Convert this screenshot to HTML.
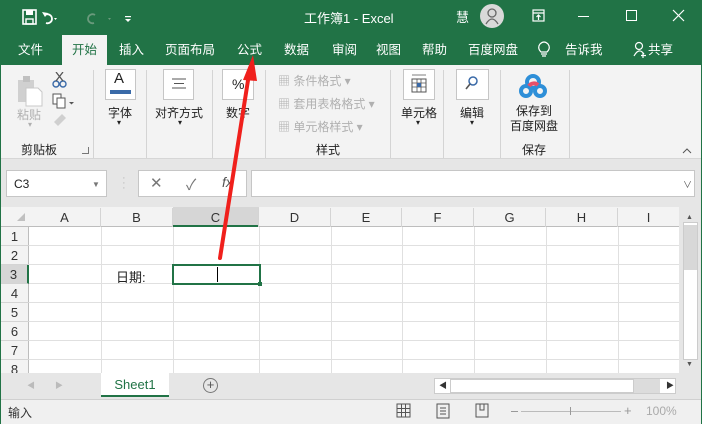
<!DOCTYPE html>
<html><head><meta charset="utf-8"><style>
*{margin:0;padding:0;box-sizing:border-box}
body{width:702px;height:424px;overflow:hidden;position:relative;background:#e6e6e6;font-family:"Liberation Sans","Noto Sans CJK SC",sans-serif;font-size:12px;color:#222}
.a{position:absolute}
.w{color:#fff}
.t{position:absolute;top:39px;color:#fff;font-size:12.5px}
.g{color:#b0b0b0}
.box{position:absolute;background:#fff;border:1px solid #c6c6c6}
.sep{position:absolute;top:70px;width:1px;height:88px;background:#d4d4d4}
.lbl{position:absolute;font-size:12px;text-align:center}
.ch{position:absolute;top:208px;height:19px;text-align:center;font-size:13px;line-height:19px;color:#333;border-right:1px solid #d4d4d4}
.rh{position:absolute;left:0;width:29px;height:19px;text-align:center;font-size:13px;line-height:19px;color:#333;border-bottom:1px solid #d4d4d4}
</style></head><body>
<div class="a" style="left:0;top:0;width:702px;height:65px;background:#217346"></div>
<svg class="a" style="left:22px;top:9px" width="120" height="18">
<rect x="1" y="1" width="13" height="14" fill="none" stroke="#fff" stroke-width="1.6"/><rect x="4" y="1" width="7" height="5" fill="#fff"/><rect x="4" y="10" width="7" height="5" fill="none" stroke="#fff" stroke-width="1.4"/>
<path d="M23 6 a4.5 4.5 0 1 1 1 8" fill="none" stroke="#fff" stroke-width="1.8"/><path d="M20 3 l3 5 l3 -4z" fill="#fff"/>
<path d="M32 9 l3 0 l-1.5 2z" fill="#fff"/>
<path d="M73 6 a4.5 4.5 0 1 0 -1 8" fill="none" stroke="#6a9a7c" stroke-width="1.8"/><path d="M86 9 l3 0 l-1.5 2z" fill="#6a9a7c"/>
<rect x="103" y="7" width="6" height="1.2" fill="#fff"/><path d="M103 10 l6 0 l-3 3z" fill="#fff"/>
</svg>
<div class="a w" style="left:304px;top:8px;font-size:13px">工作簿1 - Excel</div>
<div class="a w" style="left:456px;top:7px;font-size:13px">慧</div>
<div class="a" style="left:480px;top:4px;width:24px;height:24px;border-radius:50%;background:#d9d9d9"></div>
<svg class="a" style="left:484px;top:7px" width="16" height="18"><circle cx="8" cy="6" r="4" fill="none" stroke="#666" stroke-width="1.3"/><path d="M2 17 q6 -10 12 0" fill="none" stroke="#666" stroke-width="1.3"/></svg>
<svg class="a" style="left:532px;top:9px" width="14" height="14"><rect x="1" y="1" width="11" height="11" fill="none" stroke="#fff" stroke-width="1.2"/><path d="M1 4 h11 M6.5 6 v5 M4.5 8 l2 -2 l2 2" stroke="#fff" fill="none" stroke-width="1.2"/></svg>
<div class="a" style="left:578px;top:16px;width:11px;height:1px;background:#fff"></div>
<div class="a" style="left:626px;top:10px;width:11px;height:11px;border:1px solid #fff"></div>
<svg class="a" style="left:672px;top:9px" width="14" height="14"><path d="M1 1 L12 12 M12 1 L1 12" stroke="#fff" stroke-width="1.2"/></svg>
<div class="a" style="left:62px;top:35px;width:45px;height:30px;background:#f3f3f3"></div>
<div class="t" style="left:18px">文件</div>
<div class="t" style="left:72px;color:#217346">开始</div>
<div class="t" style="left:119px">插入</div>
<div class="t" style="left:165px">页面布局</div>
<div class="t" style="left:237px">公式</div>
<div class="t" style="left:284px">数据</div>
<div class="t" style="left:332px">审阅</div>
<div class="t" style="left:376px">视图</div>
<div class="t" style="left:422px">帮助</div>
<div class="t" style="left:468px">百度网盘</div>
<svg class="a" style="left:537px;top:40px" width="14" height="18"><path d="M4 12 q-4 -4 -1 -8 q4 -4 8 0 q3 4 -1 8 z M4 14 h6 M5 16 h4" fill="none" stroke="#fff" stroke-width="1.2"/></svg>
<div class="t" style="left:565px">告诉我</div>
<svg class="a" style="left:633px;top:41px" width="14" height="17"><circle cx="6" cy="5" r="3.5" fill="none" stroke="#fff" stroke-width="1.2"/><path d="M1 15 q5 -9 10 -2 M10 12 v5 M8 14.5 h5" fill="none" stroke="#fff" stroke-width="1.2"/></svg>
<div class="t" style="left:648px">共享</div>
<div class="a" style="left:0;top:65px;width:702px;height:94px;background:#f3f3f3;border-bottom:1px solid #d6d6d6"></div>
<svg class="a" style="left:16px;top:72px" width="60" height="70">
<rect x="2" y="8" width="16" height="22" fill="#d0d0d0"/><rect x="7" y="4" width="7" height="6" fill="#c0c0c0"/><path d="M10 16 h12 l4 4 v14 h-16z" fill="#fff" stroke="#c8c8c8"/>
<circle cx="40" cy="12" r="3" fill="none" stroke="#3a6aa8" stroke-width="1.4"/><circle cx="47" cy="12" r="3" fill="none" stroke="#3a6aa8" stroke-width="1.4"/><path d="M40 9 L47 0 M47 9 L40 0" stroke="#555" stroke-width="1.3"/>
<rect x="37" y="22" width="8" height="10" fill="#fff" stroke="#555"/><rect x="41" y="26" width="8" height="10" fill="#fff" stroke="#555"/><path d="M53 30 l5 0 l-2.5 2.5z" fill="#555"/>
<path d="M38 50 l8 -8 l4 4 l-8 8z" fill="#cfcfcf"/>
</svg>
<div class="lbl g" style="left:17px;top:106px">粘贴</div>
<div class="lbl g" style="left:28px;top:120px;font-size:8px">▾</div>
<div class="lbl" style="left:21px;top:141px">剪贴板</div>
<div class="a" style="left:82px;top:147px;width:7px;height:7px;border-right:1px solid #777;border-bottom:1px solid #777"></div>
<div class="sep" style="left:93px"></div>
<div class="box" style="left:105px;top:69px;width:31px;height:31px"></div>
<div class="a" style="left:114px;top:70px;font-size:15px">A</div>
<div class="a" style="left:110px;top:90px;width:21px;height:4px;background:#3a6aa8"></div>
<div class="lbl" style="left:108px;top:104px">字体</div>
<div class="lbl" style="left:117px;top:118px;font-size:8px">▾</div>
<div class="sep" style="left:146px"></div>
<div class="box" style="left:163px;top:69px;width:31px;height:31px"></div>
<svg class="a" style="left:170px;top:78px" width="18" height="12"><path d="M2 1 h14 M4 5.5 h10 M2 10 h14" stroke="#555"/></svg>
<div class="lbl" style="left:155px;top:104px">对齐方式</div>
<div class="lbl" style="left:178px;top:118px;font-size:8px">▾</div>
<div class="sep" style="left:212px"></div>
<div class="box" style="left:222px;top:69px;width:32px;height:31px"></div>
<div class="a" style="left:232px;top:76px;font-size:14px">%</div>
<div class="lbl" style="left:226px;top:104px">数字</div>
<div class="sep" style="left:265px"></div>
<div class="lbl g" style="left:278px;top:72px">▦ 条件格式 ▾</div>
<div class="lbl g" style="left:278px;top:95px">▦ 套用表格格式 ▾</div>
<div class="lbl g" style="left:278px;top:118px">▦ 单元格样式 ▾</div>
<div class="lbl" style="left:316px;top:141px">样式</div>
<div class="sep" style="left:390px"></div>
<div class="box" style="left:403px;top:69px;width:32px;height:31px"></div>
<svg class="a" style="left:410px;top:74px" width="18" height="20"><rect x="2" y="5" width="14" height="13" fill="none" stroke="#555"/><path d="M2 9 h14 M2 13 h14 M7 5 v13 M11 5 v13 M2 1 h14" stroke="#555" stroke-width=".8"/><rect x="7" y="9" width="4" height="4" fill="#3a6aa8"/></svg>
<div class="lbl" style="left:401px;top:104px">单元格</div>
<div class="lbl" style="left:416px;top:118px;font-size:8px">▾</div>
<div class="sep" style="left:443px"></div>
<div class="box" style="left:456px;top:69px;width:33px;height:31px"></div>
<svg class="a" style="left:464px;top:75px" width="16" height="18"><circle cx="9" cy="6" r="4" fill="none" stroke="#3a6aa8" stroke-width="1.5"/><path d="M6 9 L2 14" stroke="#555" stroke-width="1.6"/></svg>
<div class="lbl" style="left:460px;top:104px">编辑</div>
<div class="lbl" style="left:470px;top:118px;font-size:8px">▾</div>
<div class="sep" style="left:500px"></div>
<svg class="a" style="left:518px;top:73px" width="30" height="26"><circle cx="15" cy="9" r="6" fill="none" stroke="#2e8fd8" stroke-width="4"/><circle cx="8" cy="18" r="5" fill="none" stroke="#2e8fd8" stroke-width="4"/><circle cx="22" cy="18" r="5" fill="none" stroke="#2e8fd8" stroke-width="4"/><path d="M11 13 a6 6 0 0 1 9 -1" stroke="#e8506a" stroke-width="4" fill="none"/></svg>
<div class="lbl" style="left:510px;top:104px;line-height:15px">保存到<br>百度网盘</div>
<div class="lbl" style="left:522px;top:141px">保存</div>
<div class="sep" style="left:569px"></div>
<svg class="a" style="left:682px;top:148px" width="10" height="6"><path d="M1 5 l4 -4 l4 4" fill="none" stroke="#555"/></svg>
<div class="box" style="left:6px;top:170px;width:101px;height:27px"></div>
<div class="a" style="left:14px;top:177px;font-size:12px">C3</div>
<div class="a" style="left:92px;top:180px;font-size:8px;color:#777">▼</div>
<div class="a" style="left:122px;top:176px;color:#bbb;font-size:11px;line-height:5px">·<br>·<br>·</div>
<div class="box" style="left:138px;top:170px;width:109px;height:27px"></div>
<div class="a" style="left:150px;top:174px;font-size:15px;color:#777">✕</div>
<div class="a" style="left:186px;top:174px;font-size:15px;color:#777">✓</div>
<div class="a" style="left:222px;top:174px;font-size:14px;font-style:italic;color:#555">fx</div>
<div class="box" style="left:251px;top:170px;width:444px;height:27px"></div>
<div class="a" style="left:683px;top:178px;font-size:9px;color:#555">∨</div>
<div class="a" style="left:0;top:207px;width:679px;height:166px;background:#fff"></div>
<div class="a" style="left:0;top:207px;width:679px;height:20px;background:#f3f3f3;border-bottom:1px solid #bdbdbd"></div>
<div class="a" style="left:0;top:227px;width:29px;height:146px;background:#f3f3f3;border-right:1px solid #bdbdbd"></div>
<svg class="a" style="left:16px;top:212px" width="10" height="10"><path d="M9 1 V9 H1z" fill="#c0c0c0"/></svg>
<svg class="a" style="left:29px;top:227px" width="650" height="146">
<g stroke="#e0e0e0" stroke-width="1">
<path d="M72.5 0V146 M144.5 0V146 M230.5 0V146 M302.5 0V146 M373.5 0V146 M445.5 0V146 M517.5 0V146 M589.5 0V146"/>
<path d="M0 18.5H650 M0 37.5H650 M0 56.5H650 M0 75.5H650 M0 94.5H650 M0 113.5H650 M0 132.5H650"/>
</g></svg>
<div class="a" style="left:173px;top:207px;width:86px;height:20px;background:#d6d6d6;border-bottom:2px solid #217346"></div>
<div class="ch" style="left:29px;width:72px">A</div>
<div class="ch" style="left:101px;width:72px">B</div>
<div class="ch" style="left:173px;width:86px">C</div>
<div class="ch" style="left:259px;width:72px">D</div>
<div class="ch" style="left:331px;width:71px">E</div>
<div class="ch" style="left:402px;width:72px">F</div>
<div class="ch" style="left:474px;width:72px">G</div>
<div class="ch" style="left:546px;width:72px">H</div>
<div class="ch" style="left:618px;width:61px;border:none">I</div>
<div class="rh" style="top:227px">1</div>
<div class="rh" style="top:246px">2</div>
<div class="rh" style="top:265px;background:#d6d6d6;border-right:2px solid #217346">3</div>
<div class="rh" style="top:284px">4</div>
<div class="rh" style="top:303px">5</div>
<div class="rh" style="top:322px">6</div>
<div class="rh" style="top:341px">7</div>
<div class="rh" style="top:360px;border:none;height:13px;overflow:hidden">8</div>
<div class="a" style="left:116px;top:267px;font-size:13px">日期:</div>
<div class="a" style="left:172px;top:264px;width:89px;height:21px;border:2px solid #217346"></div>
<div class="a" style="left:258px;top:282px;width:4px;height:4px;background:#217346"></div>
<div class="a" style="left:217px;top:267px;width:1px;height:15px;background:#000"></div>
<div class="a" style="left:679px;top:207px;width:23px;height:166px;background:#e6e6e6"></div>
<div class="a" style="left:683px;top:222px;width:15px;height:138px;background:#fff;border:1px solid #ccc"></div>
<div class="a" style="left:684px;top:225px;width:13px;height:45px;background:#d8d8d8"></div>
<div class="a" style="left:686px;top:214px;font-size:7px;color:#555">▲</div>
<div class="a" style="left:686px;top:361px;font-size:7px;color:#555">▼</div>
<div class="a" style="left:0;top:373px;width:702px;height:26px;background:#e6e6e6"></div>
<div class="a" style="left:27px;top:380px;font-size:8px;color:#bbb">◀</div>
<div class="a" style="left:55px;top:380px;font-size:8px;color:#bbb">▶</div>
<div class="a" style="left:101px;top:373px;width:68px;height:24px;background:#fff;border-bottom:2px solid #217346;color:#217346;font-size:13px;text-align:center;line-height:24px">Sheet1</div>
<div class="a" style="left:203px;top:378px;width:15px;height:15px;border:1.3px solid #777;border-radius:50%;text-align:center;line-height:12px;font-size:13px;color:#555">+</div>
<div class="a" style="left:434px;top:378px;width:242px;height:16px;border:1px solid #ccc;background:#fff"></div>
<div class="a" style="left:450px;top:379px;width:184px;height:14px;background:#fff;border:1px solid #ccc"></div>
<div class="a" style="left:634px;top:379px;width:26px;height:14px;background:#dcdcdc"></div>
<div class="a" style="left:439px;top:380px;font-size:8px;color:#333">◀</div>
<div class="a" style="left:666px;top:380px;font-size:8px;color:#333">▶</div>
<div class="a" style="left:0;top:399px;width:702px;height:25px;background:#f0f0f0;border-top:1px solid #d0d0d0"></div>
<div class="a" style="left:8px;top:404px;font-size:12px;color:#333">输入</div>
<svg class="a" style="left:396px;top:403px" width="100" height="16"><rect x="1" y="1" width="13" height="13" fill="none" stroke="#555"/><path d="M1 5.5h13M1 9.5h13M5.5 1v13M9.5 1v13" stroke="#555"/><rect x="41" y="1" width="12" height="14" fill="none" stroke="#555"/><path d="M44 5h6M44 8h6M44 11h6" stroke="#555"/><rect x="80" y="1" width="12" height="13" fill="none" stroke="#555"/><path d="M84 1v6h4v-6" fill="none" stroke="#555"/></svg>
<div class="a" style="left:511px;top:411px;width:7px;height:1px;background:#999"></div>
<div class="a" style="left:521px;top:411px;width:100px;height:1px;background:#bbb"></div>
<div class="a" style="left:570px;top:407px;width:1px;height:8px;background:#999"></div>
<div class="a" style="left:624px;top:403px;font-size:13px;color:#999">+</div>
<div class="a" style="left:646px;top:404px;font-size:12px;color:#aaa">100%</div>
<div class="a" style="left:0;top:65px;width:1px;height:359px;background:#217346"></div>
<div class="a" style="left:701px;top:65px;width:1px;height:359px;background:#217346"></div>
<svg class="a" style="left:0;top:0" width="702" height="424"><path d="M220 258 L249 74" stroke="#f0201c" stroke-width="4" stroke-linecap="round"/><path d="M253 55 L243 80 L257 81z" fill="#f0201c"/></svg>
</body></html>
